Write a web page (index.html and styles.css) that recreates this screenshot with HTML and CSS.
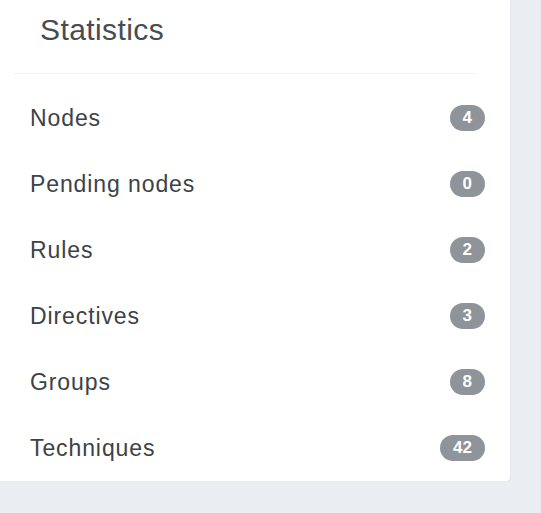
FILE: index.html
```html
<!DOCTYPE html>
<html>
<head>
  <meta charset="utf-8">
  <title>Statistics</title>
  <link rel="stylesheet" href="styles.css">
</head>
<body>
  <div class="card">
    <div class="card-header">Statistics</div>
    <ul class="stats">
      <li class="stat"><span class="stat-label">Nodes</span><span class="badge">4</span></li>
      <li class="stat"><span class="stat-label">Pending nodes</span><span class="badge">0</span></li>
      <li class="stat"><span class="stat-label">Rules</span><span class="badge">2</span></li>
      <li class="stat"><span class="stat-label">Directives</span><span class="badge">3</span></li>
      <li class="stat"><span class="stat-label">Groups</span><span class="badge">8</span></li>
      <li class="stat"><span class="stat-label">Techniques</span><span class="badge">42</span></li>
    </ul>
  </div>
</body>
</html>
```

FILE: styles.css
```css
/* page */
body {
  margin: 0;
  background-color: #eaedf1;
  font-family: "Liberation Sans", Arial, sans-serif;
}

/* card */
.card {
  width: 510px;
  background-color: #ffffff;
  border-radius: 0 0 4px 0;
  box-shadow: 0 1px 2px rgba(0, 0, 0, 0.08);
}

/* header */
.card-header {
  margin: 0 34px 0 14px;
  padding: 11px 0 25px 26px;
  border-bottom: 1px solid #f0f1f3;
  font-size: 30px;
  line-height: 37px;
  letter-spacing: 0.4px;
  color: #464c51;
}

/* list */
.stats {
  list-style: none;
  margin: 0;
  padding: 11px 0 0 0;
}

.stat {
  display: flex;
  align-items: center;
  justify-content: space-between;
  height: 66px;
  padding: 0 25px 0 30px;
}

.stat-label {
  font-size: 23px;
  letter-spacing: 0.9px;
  color: #3c4247;
}

/* badge */
.badge {
  height: 26px;
  padding: 0 13px;
  border-radius: 13px;
  background-color: #8e9499;
  color: #ffffff;
  font-size: 17px;
  font-weight: bold;
  line-height: 26px;
  text-align: center;
}
```
